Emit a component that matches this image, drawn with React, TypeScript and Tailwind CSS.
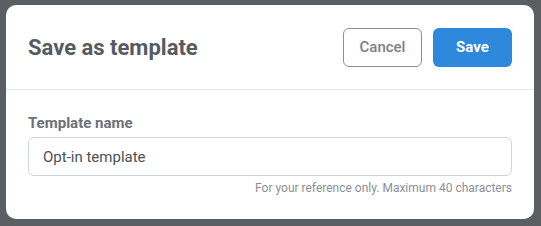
import { useState } from 'react'

function App() {
  const [name, setName] = useState('Opt-in template')

  return (
    <main className="h-[226px] w-[541px] bg-[#5b5f64] pl-[6px] pt-[5px] font-['Roboto',sans-serif]">
      <section className="h-[214px] w-[528px] rounded-[10px] bg-white">
        <header className="flex h-[85px] items-center justify-between border-b border-[#e6e8ea] px-[22px] pt-[1px]">
          <h2 className="text-[22px] font-bold text-[#555b62]">Save as template</h2>
          <div className="flex gap-[11px]">
            <button
              type="button"
              className="h-[39px] w-[79px] rounded-[6px] border border-[#8b9096] text-[15px] font-medium text-[#7b8086]"
            >
              Cancel
            </button>
            <button
              type="button"
              className="h-[39px] w-[79px] rounded-[6px] bg-[#2e88dc] text-[15px] font-bold text-white"
            >
              Save
            </button>
          </div>
        </header>

        <div className="px-[22px] pt-[25px]">
          <label htmlFor="template-name" className="block text-[15px] font-bold leading-[16px] text-[#6c7278]">
            Template name
          </label>
          <input
            id="template-name"
            type="text"
            value={name}
            maxLength={40}
            onChange={(e) => setName(e.target.value)}
            autoFocus
            className="mt-[6px] h-[39px] w-full rounded-[6px] border border-[#ccd6e0] px-[14px] text-[15px] text-[#4b5157] caret-[#2b3036] outline-none"
          />
          <p className="mt-[3px] text-right text-[12px] text-[#8b9096]">
            For your reference only. Maximum 40 characters
          </p>
        </div>
      </section>
    </main>
  )
}

export default App
